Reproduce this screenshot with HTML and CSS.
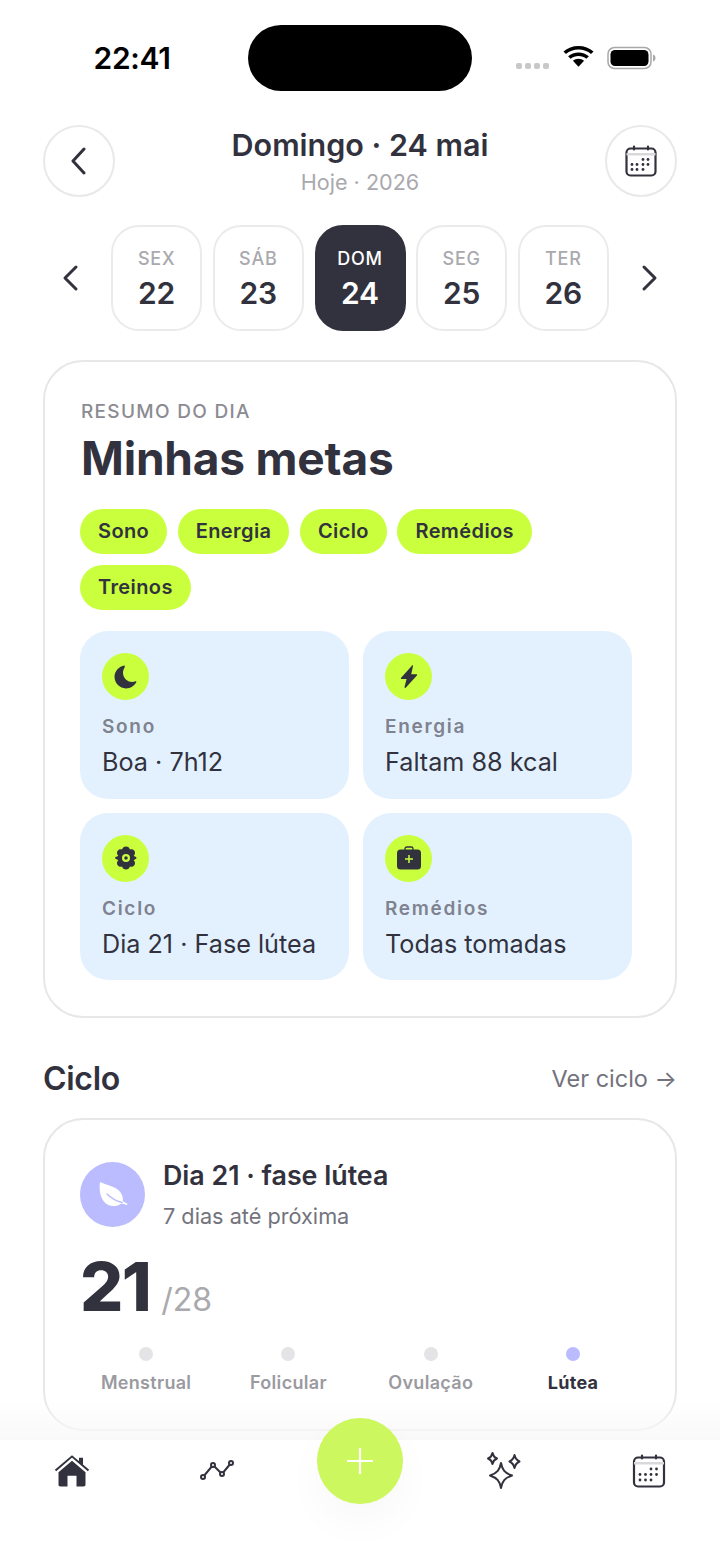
FILE: index.html
```html
<!DOCTYPE html>
<html lang="pt-BR">
  <head>
    <meta charset="utf-8">
    <title>Minhas metas</title>
    <link rel="stylesheet" href="styles.css">
  </head>
  <body>
    <div class="screen">
      <div class="status">
        <span class="time">22:41</span>
        <div class="island"></div>
        <div class="status-icons">
          <div class="signal"><i></i><i></i><i></i><i></i></div>
          <svg class="wifi" width="31" height="21" viewBox="2 1 26 19" preserveAspectRatio="none">
            <path d="M15 4.200c4 0 7.700 1.500 10.500 4.100l2.100-2.300C24.300 2.800 19.900 1 15 1S5.700 2.800 2.400 6l2.100 2.300C7.300 5.700 11 4.200 15 4.200z"/>
            <path d="M15 10c2.500 0 4.800.9 6.600 2.500l2.100-2.300C21.300 8 18.300 6.800 15 6.800S8.700 8 6.300 10.200l2.100 2.300C10.200 10.900 12.500 10 15 10z"/>
            <path d="M15 12.600c-1.800 0-3.400.7-4.700 1.800l4.700 5.400 4.700-5.400c-1.300-1.100-2.900-1.800-4.700-1.800z"/>
          </svg>
          <svg class="battery" width="50" height="24" viewBox="0 0 50 24">
            <rect x="1" y="1.500" width="43" height="21" rx="6.500" fill="none" stroke="#a8a8a8" stroke-width="1.500"/>
            <rect x="3.500" y="4" width="38" height="16" rx="4.500" fill="#000"/>
            <path d="M46 8.500c1.600.5 2.500 1.800 2.500 3.500s-.9 3-2.500 3.500z" fill="#a8a8a8"/>
          </svg>
        </div>
      </div>

      <header class="top">
        <button class="round">
          <svg width="28" height="28" viewBox="0 0 28 28" class="line"><path d="M19 2 8 14l11 12"/></svg>
        </button>
        <div class="top-title">
          <h1>Domingo · 24 mai</h1>
          <p>Hoje · 2026</p>
        </div>
        <button class="round">
          <svg width="34" height="34" viewBox="0 0 34 34" class="cal">
            <path d="M10 2.500v3M24 2.500v3"/>
            <rect x="2.500" y="4.500" width="29" height="27" rx="4"/>
            <path d="M2.500 9h29v2.500h-29z" class="cal-band"/>
            <g class="cal-dots"><circle cx="19" cy="15.500" r="1.400"/><circle cx="24" cy="15.500" r="1.400"/><circle cx="8" cy="20.500" r="1.400"/><circle cx="13" cy="20.500" r="1.400"/><circle cx="19" cy="20.500" r="1.400"/><circle cx="24" cy="20.500" r="1.400"/><circle cx="8" cy="25.500" r="1.400"/><circle cx="13" cy="25.500" r="1.400"/><circle cx="19" cy="25.500" r="1.400"/></g>
          </svg>
        </button>
      </header>

      <nav class="days">
        <svg width="24" height="28" viewBox="0 0 24 28" class="line arrow"><path d="M17 3 6 14l11 11"/></svg>
        <div class="day"><span>SEX</span><strong>22</strong></div>
        <div class="day"><span>SÁB</span><strong>23</strong></div>
        <div class="day active"><span>DOM</span><strong>24</strong></div>
        <div class="day"><span>SEG</span><strong>25</strong></div>
        <div class="day"><span>TER</span><strong>26</strong></div>
        <svg width="24" height="28" viewBox="0 0 24 28" class="line arrow"><path d="m7 3 11 11L7 25"/></svg>
      </nav>

      <section class="card goals">
        <p class="eyebrow">RESUMO DO DIA</p>
        <h2>Minhas metas</h2>
        <div class="chips">
          <span class="chip">Sono</span>
          <span class="chip">Energia</span>
          <span class="chip">Ciclo</span>
          <span class="chip">Remédios</span>
          <span class="chip">Treinos</span>
        </div>
        <div class="tiles">
          <div class="tile">
            <div class="badge">
              <svg width="26" height="26" viewBox="0 0 26 26"><path d="M11.500 1.500C6 2.300 1.500 7 1.500 12.800 1.500 19.200 6.700 24.400 13 24.400c4.400 0 8.300-2.500 10.300-6.200.3-.6-.2-1.100-.8-.9-1 .4-2.200.6-3.400.6-5.200 0-9.100-4-9.100-9.100 0-1.600.5-3.200 1.200-4.500.6-1 .9-2.800.3-2.800z"/></svg>
            </div>
            <p class="tile-name">Sono</p>
            <p class="tile-value">Boa · 7h12</p>
          </div>
          <div class="tile">
            <div class="badge">
              <svg width="18" height="24" viewBox="0 0 20 26"><path d="M13 .8 1.200 13.700c-.5.6-.2 1.400.6 1.400h5.500L5 24.200c-.2.800.7 1.300 1.300.7l12.500-13.500c.5-.6.100-1.400-.7-1.400h-5.600l1.900-9c.2-.8-.8-1.300-1.400-.7z"/></svg>
            </div>
            <p class="tile-name">Energia</p>
            <p class="tile-value">Faltam 88 kcal</p>
          </div>
          <div class="tile">
            <div class="badge">
              <svg width="24" height="24" viewBox="0 0 24 24"><path fill-rule="evenodd" d="M12 .5c2 0 3.500 1.300 3.900 3 1.700-.6 3.600-.2 4.600 1.500s.5 3.600-.8 4.800c1.500 1 2.800 1.200 2.800 2.200s-1.300 1.200-2.800 2.200c1.300 1.200 1.800 3.100.8 4.800s-2.900 2.100-4.600 1.500c-.4 1.700-1.900 3-3.900 3s-3.500-1.300-3.900-3c-1.700.6-3.600.2-4.600-1.500s-.5-3.600.8-4.800C2.800 13.200 1 13 1 12s1.800-1.200 3.300-2.200C3 8.600 2.500 6.700 3.500 5s2.900-2.100 4.600-1.500C8.500 1.800 10 .5 12 .5zM12 8a4 4 0 1 0 0 8 4 4 0 0 0 0-8zm0 2.200a1.800 1.800 0 1 1 0 3.600 1.800 1.800 0 0 1 0-3.600z"/></svg>
            </div>
            <p class="tile-name">Ciclo</p>
            <p class="tile-value">Dia 21 · Fase lútea</p>
          </div>
          <div class="tile">
            <div class="badge">
              <svg width="24" height="24" viewBox="0 0 24 24"><path d="M8 4V2.800C8 1.800 8.800 1 9.800 1h4.400c1 0 1.800.8 1.800 1.800V4" fill="none" stroke="#32323e" stroke-width="1.300"/><rect y="3.500" width="24" height="20" rx="3.500"/><path d="M12 9v8M8 13h8" stroke="#c9ff3d" stroke-width="1.500"/></svg>
            </div>
            <p class="tile-name">Remédios</p>
            <p class="tile-value">Todas tomadas</p>
          </div>
        </div>
      </section>

      <div class="section-head">
        <h3>Ciclo</h3>
        <span>Ver ciclo →</span>
      </div>

      <section class="card cycle">
        <div class="cycle-head">
          <div class="leaf">
            <svg width="30" height="27" viewBox="0 0 30 27"><path d="M2 1C10 5 20 5 24 14c1 2.500 1 4.500.8 6.200l4.700 2.600-.5 1.200-5.300-1.600C18 26 10 26.500 5.500 20 2 15 1 8 2 1z" fill="#fff"/><path d="M9 13c4 4 9 7 15 8.500" fill="none" stroke="#babcff" stroke-width="1.500" stroke-linecap="round"/></svg>
          </div>
          <div>
            <h4>Dia 21 · fase lútea</h4>
            <p>7 dias até próxima</p>
          </div>
        </div>
        <div class="count"><strong>21</strong><span>/28</span></div>
        <div class="phases">
          <div class="phase"><i></i><span>Menstrual</span></div>
          <div class="phase"><i></i><span>Folicular</span></div>
          <div class="phase"><i></i><span>Ovulação</span></div>
          <div class="phase current"><i></i><span>Lútea</span></div>
        </div>
      </section>

      <footer class="tabbar">
        <svg class="tab" width="36" height="32" viewBox="0 0 36 34" preserveAspectRatio="none">
          <path d="M1.500 16.500 18 1.500l16.500 15" fill="none" stroke="#32323e" stroke-width="2"/>
          <path d="M25 3h4v8l-4-3.600z" fill="#32323e"/>
          <path fill-rule="evenodd" d="M18 6 4.500 18.200v13.500c0 1 .7 1.800 1.800 1.800h7.200V22h9v11.500h7.200c1 0 1.800-.8 1.800-1.800V18.200z" fill="#32323e"/>
        </svg>
        <svg class="tab" width="38" height="24" viewBox="0 0 38 24" fill="none" stroke="#32323e" stroke-width="2">
          <path d="m5 19 10-12 9 9 9-11"/>
          <circle cx="5" cy="19" r="2" fill="#fff"/><circle cx="15" cy="7" r="2" fill="#fff"/><circle cx="24" cy="16" r="2" fill="#fff"/><circle cx="33" cy="5" r="2" fill="#fff"/>
        </svg>
        <button class="fab">
          <svg width="28" height="28" viewBox="0 0 28 28"><path d="M14 1v26M1 14h26" stroke="#fff" stroke-width="2.200"/></svg>
        </button>
        <svg class="tab" width="40" height="38" viewBox="0 0 40 38" fill="none" stroke="#32323e" stroke-width="2" stroke-linejoin="round">
          <path d="M9.500 1c.7 3.200 1.900 4.500 4.500 5.500-2.600 1-3.800 2.300-4.500 5.500C8.800 8.800 7.600 7.500 5 6.500 7.600 5.500 8.800 4.200 9.500 1z"/>
          <path d="M31.500 3c.8 3.700 2 5.100 5 6.500-3 1.400-4.200 2.800-5 6.500-.8-3.700-2-5.100-5-6.500 3-1.400 4.200-2.800 5-6.500z"/>
          <path d="M18 11c1.300 6.800 3.600 10 11 12.500-7.400 2.500-9.700 5.700-11 12.500-1.300-6.800-3.600-10-11-12.500C14.400 21 16.700 17.800 18 11z"/>
        </svg>
        <svg class="tab cal" width="34" height="34" viewBox="0 0 34 34">
          <path d="M10 1.500v3M24 1.500v3"/>
          <rect x="2" y="3.500" width="30" height="29" rx="4"/>
          <path d="M2 8h30v2.500H2z" class="cal-band"/>
          <g class="cal-dots"><circle cx="19" cy="15" r="1.400"/><circle cx="24.500" cy="15" r="1.400"/><circle cx="8" cy="20.500" r="1.400"/><circle cx="13.500" cy="20.500" r="1.400"/><circle cx="19" cy="20.500" r="1.400"/><circle cx="24.500" cy="20.500" r="1.400"/><circle cx="8" cy="26" r="1.400"/><circle cx="13.500" cy="26" r="1.400"/><circle cx="19" cy="26" r="1.400"/></g>
        </svg>
      </footer>
    </div>
  </body>
</html>
```

FILE: styles.css
```css
* { box-sizing: border-box; }
html, body { margin: 0; padding: 0; background: #fff; }
h1, h2, h3, h4, p { margin: 0; }
.screen { position: relative; width: 720px; height: 1565px; overflow: hidden; padding: 0 43px; font-family: Inter, "Liberation Sans", sans-serif; color: #32323e; }

.status { position: relative; height: 125px; margin: 0 -43px; }
.time { position: absolute; left: 93.500px; top: 40px; font-size: 30px; line-height: 36px; font-weight: 600; color: #000; letter-spacing: -0.3px; }
.island { position: absolute; left: 248px; top: 25px; width: 224px; height: 66px; border-radius: 33px; background: #000; }
.status-icons { position: absolute; left: 516px; top: 46px; display: flex; align-items: flex-start; }
.signal { display: flex; gap: 3px; margin-top: 17px; }
.signal i { width: 6px; height: 6px; border-radius: 2px; background: #c8c8c8; }
.wifi { margin-left: 14px; }
.battery { margin-left: 13px; }

.top { display: flex; justify-content: space-between; align-items: center; height: 72px; }
.round { width: 72px; height: 72px; border-radius: 50%; border: 2px solid #e9e9e9; background: #fff; display: flex; align-items: center; justify-content: center; padding: 0; }
.top-title { text-align: center; margin-top: 0; }
.top-title h1 { font-size: 30.500px; line-height: 40px; font-weight: 600; }
.top-title p { font-size: 21.600px; line-height: 30px; color: #a9a9ae; margin-top: 2px; }
.line { fill: none; stroke: #32323e; stroke-width: 3; stroke-linecap: round; stroke-linejoin: round; }
.cal { fill: none; stroke: #32323e; stroke-width: 2.200; stroke-linecap: round; }
.cal-band { fill: #d9d9dc; stroke: none; }
.cal-dots { fill: #32323e; stroke: none; }

.days { display: flex; align-items: center; justify-content: center; gap: 10.700px; margin: 28px -3.500px 0 -3.500px; height: 106px; }
.arrow { flex: none; }
.arrow:first-child { margin-right: 17px; margin-left: -3px; }
.arrow:last-child { margin-left: 17px; margin-right: -3px; }
.day { width: 91px; height: 106px; border: 2px solid #ebebeb; border-radius: 28px; display: flex; flex-direction: column; align-items: center; padding-top: 21px; }
.day span { font-size: 18px; line-height: 22px; font-weight: 500; letter-spacing: 0.8px; color: #a9a9ae; }
.day strong { font-size: 30px; line-height: 38px; font-weight: 600; margin-top: 4px; }
.day.active { background: #32323e; border-color: #32323e; }
.day.active span, .day.active strong { color: #fff; }

.card { border: 2px solid #e7e7e7; border-radius: 40px; background: #fff; }
.goals { height: 658px; margin-top: 29px; padding: 38px 35px 0; }
.eyebrow { font-size: 19px; line-height: 24px; font-weight: 500; letter-spacing: 1.300px; color: #8b8b92; padding-left: 1px; }
.goals h2 { font-size: 46px; line-height: 56px; font-weight: 700; margin-top: 6px; letter-spacing: -0.2px; padding-left: 1px; }
.chips { display: flex; flex-wrap: wrap; gap: 11px 10.500px; margin-top: 23px; width: 552px; }
.chip { height: 45px; line-height: 45px; padding: 0 18px; border-radius: 23px; background: #c9ff3d; font-size: 20px; font-weight: 600; letter-spacing: 0.4px; }
.tiles { display: grid; grid-template-columns: 269px 269px; gap: 14px; margin-top: 21px; }
.tile { height: 167.500px; background: #e3f1fe; border-radius: 28px; padding: 22px 22px 0; }
.badge { width: 47px; height: 47px; border-radius: 50%; background: #c9ff3d; display: flex; align-items: center; justify-content: center; }
.badge svg { fill: #32323e; }
.tile-name { font-size: 19px; line-height: 24px; font-weight: 600; letter-spacing: 1.700px; color: #7f828f; margin-top: 15px; }
.tile-value { font-size: 25.200px; line-height: 32px; margin-top: 7px; }

.section-head { display: flex; justify-content: space-between; align-items: center; margin-top: 41px; height: 39px; }
.section-head h3 { font-size: 32px; font-weight: 600; letter-spacing: -0.3px; }
.section-head span { font-size: 23.500px; color: #73737d; }

.cycle { height: 313px; margin-top: 20px; padding: 42px 35px 0; }
.cycle-head { display: flex; gap: 18px; }
.leaf { width: 65px; height: 65px; border-radius: 50%; background: #babcff; display: flex; align-items: center; justify-content: center; }
.cycle-head h4 { font-size: 26.800px; line-height: 34px; font-weight: 600; margin-top: -4px; }
.cycle-head p { font-size: 21.700px; line-height: 28px; color: #73737d; margin-top: 10px; }
.count { display: flex; align-items: baseline; gap: 11px; margin-top: 18px; height: 76px; }
.count strong { font-size: 68px; line-height: 76px; font-weight: 800; letter-spacing: -1.600px; }
.count span { font-size: 32px; color: #a9a9ae; }
.phases { display: grid; grid-template-columns: repeat(4, 142.300px); margin: 23px 0 0 -5px; }
.phase { display: flex; flex-direction: column; align-items: center; gap: 11px; }
.phase i { width: 14px; height: 14px; border-radius: 50%; background: #e4e4e6; }
.phase span { font-size: 18px; line-height: 22px; font-weight: 600; letter-spacing: 0.3px; color: #9a9aa0; }
.phase.current i { background: #babcff; }
.phase.current span { color: #32323e; font-weight: 700; }

.tabbar { position: absolute; left: 0; right: 0; top: 1440px; bottom: 0; background: #fff; }
.tabbar::before { content: ""; position: absolute; left: 0; right: 0; top: -40px; height: 40px; background: linear-gradient(rgba(248,248,248,0), #f9f9f9); }
.tab { position: absolute; }
.tab:nth-child(1) { left: 54px; top: 15px; }
.tab:nth-child(2) { left: 198px; top: 18px; }
.tab:nth-child(4) { left: 483px; top: 12px; }
.tab:nth-child(5) { left: 632px; top: 14px; }
.fab { position: absolute; left: 317px; top: -22px; width: 86px; height: 86px; border: 0; padding: 0; border-radius: 50%; background: #cdf75e; display: flex; align-items: center; justify-content: center; box-shadow: 0 18px 40px rgba(0,0,0,0.03); }
```
